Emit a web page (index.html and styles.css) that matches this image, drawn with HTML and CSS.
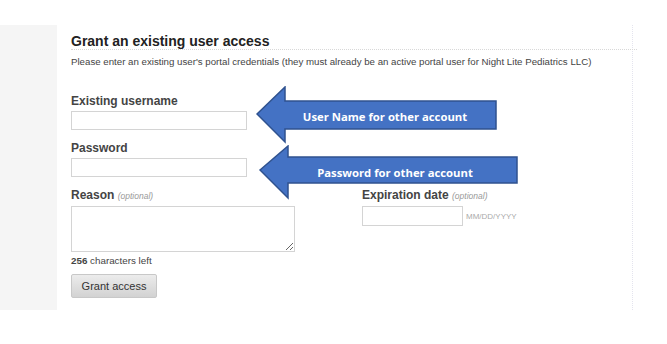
FILE: index.html
```html
<!DOCTYPE html>
<html lang="en">
<head>
    <meta charset="UTF-8">
    <meta name="viewport" content="width=device-width, initial-scale=1.0">
    <title>Grant an existing user access</title>
    <link rel="stylesheet" href="styles.css">
</head>
<body>
    <div class="page">
        <div class="sidebar"></div>

        <div class="main">
            <h2 class="title">Grant an existing user access</h2>
            <p class="intro">Please enter an existing user's portal credentials (they must already be an active portal user for Night Lite Pediatrics LLC)</p>

            <form class="grant-form">
                <div class="field">
                    <label for="username">Existing username</label>
                    <input type="text" id="username" class="text-input">
                </div>

                <div class="field">
                    <label for="password">Password</label>
                    <input type="password" id="password" class="text-input">
                </div>

                <div class="row">
                    <div class="field">
                        <label for="reason">Reason <span class="optional">(optional)</span></label>
                        <textarea id="reason" class="reason-input"></textarea>
                        <p class="chars-left"><strong>256</strong> characters left</p>
                    </div>
                    <div class="field expiry">
                        <label for="expiry">Expiration date <span class="optional">(optional)</span></label>
                        <div class="date-row">
                            <input type="text" id="expiry" class="date-input">
                            <span class="date-hint">MM/DD/YYYY</span>
                        </div>
                    </div>
                </div>

                <button type="button" class="grant-button">Grant access</button>
            </form>
        </div>
    </div>

    <!-- callout arrows pasted over the form -->
    <svg class="callout callout-user" width="244" height="58" viewBox="0 0 244 58">
        <polygon points="1,28 29,1 29,15 240,15 240,43 29,43 29,56" fill="#4472c4" stroke="#2f528f" stroke-width="1.5"/>
        <text x="129" y="35" class="callout-text" text-anchor="middle">User Name for other account</text>
    </svg>
    <svg class="callout callout-pass" width="262" height="56" viewBox="0 0 262 56">
        <polygon points="1,25 29,1 29,12 258,12 258,38 29,38 29,53" fill="#4472c4" stroke="#2f528f" stroke-width="1.5"/>
        <text x="136" y="32" class="callout-text" text-anchor="middle">Password for other account</text>
    </svg>
</body>
</html>
```

FILE: styles.css
```css
body {
    font-family: "Liberation Sans", Arial, sans-serif;
    margin: 0;
    padding: 0;
    background-color: white;
    color: #333;
}
.page {
    display: flex;
    margin-top: 25px;
    height: 285px;
}
.sidebar {
    width: 57px;
    background-color: #f5f5f5;
}
.main {
    width: 561px;
    padding: 8px 0 0 14px;
    border-right: 1px dotted #e4e4ee;
}
.title {
    font-size: 14px;
    color: #222;
    margin: 0 -5px 0 0;
    line-height: 16px;
    border-bottom: 1px dotted #d8d8d8;
}
.intro {
    font-size: 9.7px;
    line-height: 12px;
    color: #444;
    white-space: nowrap;
    margin: 6px 0 0;
}
.grant-form {
    margin-top: 25px;
}
.field label {
    display: block;
    font-size: 12px;
    font-weight: bold;
    color: #444;
    line-height: 16px;
    margin-bottom: 2px;
}
.optional {
    font-size: 8.5px;
    font-weight: normal;
    font-style: italic;
    color: #999;
}
.text-input {
    display: block;
    width: 176px;
    height: 19px;
    box-sizing: border-box;
    border: 1px solid #d4d4d4;
    margin: 0 0 10px;
    padding: 2px 4px;
}
.row {
    display: flex;
    gap: 67px;
}
.reason-input {
    display: block;
    width: 224px;
    height: 46px;
    box-sizing: border-box;
    border: 1px solid #d4d4d4;
    margin: 0;
    resize: vertical;
}
.chars-left {
    font-size: 9.8px;
    line-height: 12px;
    color: #444;
    margin: 3px 0 7px;
}
.date-row {
    display: flex;
    align-items: center;
    gap: 3px;
}
.date-input {
    width: 101px;
    height: 20px;
    box-sizing: border-box;
    border: 1px solid #d4d4d4;
    margin: 0;
}
.date-hint {
    font-size: 8px;
    color: #aaa;
}
.grant-button {
    font-family: "Liberation Sans", Arial, sans-serif;
    font-size: 11px;
    color: #333;
    width: 86px;
    height: 24px;
    border: 1px solid #c8c8c8;
    border-radius: 2px;
    background: linear-gradient(#ececec, #d2d2d2);
    cursor: pointer;
}
.callout {
    position: absolute;
}
.callout-user {
    left: 256px;
    top: 86px;
}
.callout-pass {
    left: 259px;
    top: 145px;
}
.callout-text {
    font-family: "Open Sans", sans-serif;
    font-weight: bold;
    font-size: 11.3px;
    fill: white;
}
```
